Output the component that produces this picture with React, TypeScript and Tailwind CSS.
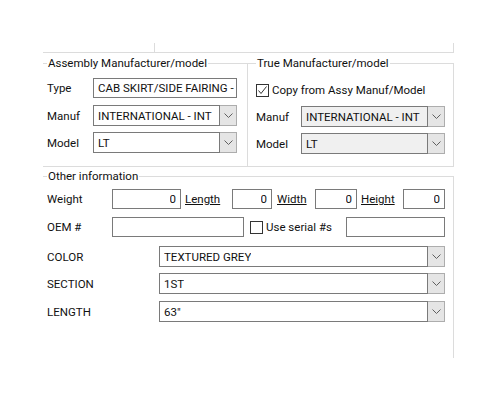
import React from 'react';

function Chevron() {
  return (
    <svg width="9" height="5" viewBox="0 0 9 5" className="block">
      <path d="M0.5 0.5 L4.5 4.5 L8.5 0.5" fill="none" stroke="#606060" strokeWidth="1" />
    </svg>
  );
}

function TextBox({ value, width, align = 'left', pad = 'px-[4px]' }: { value?: string; width: string; align?: 'left' | 'right'; pad?: string }) {
  return (
    <div
      className={`${width} h-[20px] border border-[#7a7a7a] bg-white flex items-center ${pad} ${align === 'right' ? 'justify-end' : 'justify-start'}`}
    >
      <span className="whitespace-nowrap overflow-hidden">{value}</span>
    </div>
  );
}

function Dropdown({ value, width, disabled = false }: { value: string; width: string; disabled?: boolean }) {
  return (
    <div className={`${width} h-[21px] flex`}>
      <div
        className={`flex-1 border border-[#7a7a7a] flex items-center px-[4px] ${disabled ? 'bg-[#f0f0f0]' : 'bg-white'}`}
      >
        <span className="whitespace-nowrap overflow-hidden">{value}</span>
      </div>
      <div className="w-[17px] border border-l-0 border-[#adadad] bg-[#e5e5e5] flex items-center justify-center">
        <Chevron />
      </div>
    </div>
  );
}

function CheckBox({ checked = false }: { checked?: boolean }) {
  return (
    <div className="w-[13px] h-[13px] border border-[#333333] bg-white flex items-center justify-center shrink-0">
      {checked && (
        <svg width="11" height="11" viewBox="0 0 11 11" className="block">
          <path d="M1.5 5.5 L4 8.5 L9.5 1.5" fill="none" stroke="#333333" strokeWidth="1" />
        </svg>
      )}
    </div>
  );
}

export default function App() {
  return (
    <div className="w-[500px] h-[400px] bg-white text-[11.5px] text-[#111] font-['Roboto',sans-serif] leading-[16px]">
      <div className="pt-[43px] pl-[43px] w-[454px]">
        {/* top stub of previous panel */}
        <div className="h-[10px] border-b border-r border-[#dcdcdc]">
          <div className="w-[112px] h-full border-r border-[#dcdcdc]" />
        </div>

        {/* Manufacturer groups */}
        <div className="flex mt-[2px]">
          <fieldset className="w-[205px] border-t border-r border-b border-[#dcdcdc] pl-[4px] pb-[12px]">
            <legend className="px-[1px]">Assembly Manufacturer/model</legend>
            <div className="flex items-center mt-[7px]">
              <span className="w-[46px]">Type</span>
              <TextBox value="CAB SKIRT/SIDE FAIRING -" width="w-[144px]" pad="pl-[4px] pr-[1px]" />
            </div>
            <div className="flex items-center mt-[7px]">
              <span className="w-[46px]">Manuf</span>
              <Dropdown value="INTERNATIONAL - INT" width="w-[144px]" />
            </div>
            <div className="flex items-center mt-[6px]">
              <span className="w-[46px]">Model</span>
              <Dropdown value="LT" width="w-[144px]" />
            </div>
          </fieldset>
          <fieldset className="w-[206px] border-t border-r border-b border-[#dcdcdc] pl-[8px] pb-[12px]">
            <legend className="px-[1px]">True Manufacturer/model</legend>
            <div className="flex items-center gap-[3px] mt-[11px] h-[16px]">
              <CheckBox checked />
              <span>Copy from Assy Manuf/Model</span>
            </div>
            <div className="flex items-center mt-[8px]">
              <span className="w-[45px]">Manuf</span>
              <Dropdown value="INTERNATIONAL - INT" width="w-[144px]" disabled />
            </div>
            <div className="flex items-center mt-[6px]">
              <span className="w-[45px]">Model</span>
              <Dropdown value="LT" width="w-[144px]" disabled />
            </div>
          </fieldset>
        </div>

        {/* Other information */}
        <fieldset className="mt-[1px] h-[190px] border-t border-r border-[#dcdcdc] pl-[4px]">
          <legend className="px-[1px]">Other information</legend>
          <div className="flex items-center mt-[5px]">
            <span className="w-[65px]">Weight</span>
            <TextBox value="0" width="w-[69px]" align="right" />
            <span className="w-[51px] pl-[4px] underline">Length</span>
            <TextBox value="0" width="w-[40px]" align="right" />
            <span className="w-[43px] pl-[5px] underline">Width</span>
            <TextBox value="0" width="w-[42px]" align="right" />
            <span className="w-[46px] pl-[4px] underline">Height</span>
            <TextBox value="0" width="w-[42px]" align="right" />
          </div>
          <div className="flex items-center mt-[8px]">
            <span className="w-[65px]">OEM #</span>
            <TextBox width="w-[132px]" />
            <div className="flex items-center w-[102px] pl-[6px] gap-[3px]">
              <CheckBox />
              <span>Use serial #s</span>
            </div>
            <TextBox width="w-[99px]" />
          </div>
          <div className="flex items-center mt-[9px]">
            <span className="w-[112px]">COLOR</span>
            <Dropdown value="TEXTURED GREY" width="w-[286px]" />
          </div>
          <div className="flex items-center mt-[6px]">
            <span className="w-[112px]">SECTION</span>
            <Dropdown value="1ST" width="w-[286px]" />
          </div>
          <div className="flex items-center mt-[7px]">
            <span className="w-[112px]">LENGTH</span>
            <Dropdown value={'63"'} width="w-[286px]" />
          </div>
        </fieldset>
      </div>
    </div>
  );
}
